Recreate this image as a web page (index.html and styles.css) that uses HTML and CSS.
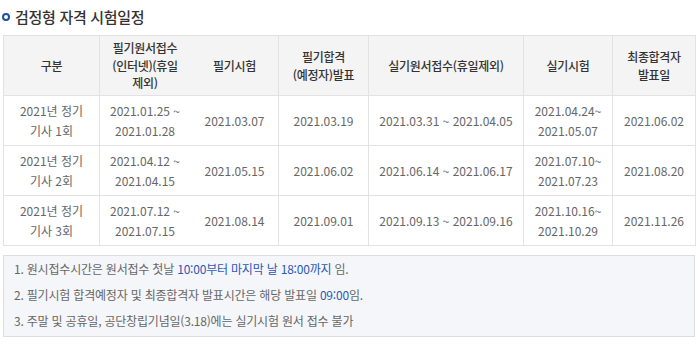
FILE: index.html
```html
<!DOCTYPE html>
<html lang="ko">
<head>
<meta charset="utf-8">
<link rel="stylesheet" href="styles.css">
</head>
<body>
<div class="page">
  <h2 class="title"><span class="dot"></span>검정형 자격 시험일정</h2>
  <table class="sched">
    <colgroup>
      <col class="c1"><col class="c2"><col class="c3"><col class="c4"><col class="c5"><col class="c6"><col class="c7">
    </colgroup>
    <thead>
      <tr>
        <th>구분</th>
        <th class="nob">필기원서접수<br>(인터넷)(휴일<br>제외)</th>
        <th>필기시험</th>
        <th>필기합격<br>(예정자)발표</th>
        <th>실기원서접수(휴일제외)</th>
        <th>실기시험</th>
        <th>최종합격자<br>발표일</th>
      </tr>
    </thead>
    <tbody>
      <tr>
        <td>2021년 정기<br>기사 1회</td>
        <td class="nob">2021.01.25 ~<br>2021.01.28</td>
        <td>2021.03.07</td>
        <td>2021.03.19</td>
        <td>2021.03.31 ~ 2021.04.05</td>
        <td>2021.04.24~<br>2021.05.07</td>
        <td>2021.06.02</td>
      </tr>
      <tr>
        <td>2021년 정기<br>기사 2회</td>
        <td class="nob">2021.04.12 ~<br>2021.04.15</td>
        <td>2021.05.15</td>
        <td>2021.06.02</td>
        <td>2021.06.14 ~ 2021.06.17</td>
        <td>2021.07.10~<br>2021.07.23</td>
        <td>2021.08.20</td>
      </tr>
      <tr>
        <td>2021년 정기<br>기사 3회</td>
        <td class="nob">2021.07.12 ~<br>2021.07.15</td>
        <td>2021.08.14</td>
        <td>2021.09.01</td>
        <td>2021.09.13 ~ 2021.09.16</td>
        <td>2021.10.16~<br>2021.10.29</td>
        <td>2021.11.26</td>
      </tr>
    </tbody>
  </table>
  <div class="notes">
    <p>1. 원시접수시간은 원서접수 첫날 <span class="hl">10:00부터 마지막 날 18:00까지</span> 임.</p>
    <p>2. 필기시험 합격예정자 및 최종합격자 발표시간은 해당 발표일 <span class="hl">09:00</span>임.</p>
    <p>3. 주말 및 공휴일, 공단창립기념일(3.18)에는 실기시험 원서 접수 불가</p>
  </div>
</div>
</body>
</html>
```

FILE: styles.css
```css
html, body {
  margin: 0;
  padding: 0;
  background: #fff;
}
.page {
  width: 692px;
  padding: 0 5px 0 3px;
  font-family: "Noto Sans CJK KR", "Noto Sans", sans-serif;
  color: #666;
}
.title {
  display: flex;
  align-items: center;
  gap: 5px;
  margin: 0 0 0 -1px;
  height: 35px;
  padding-bottom: 3px;
  box-sizing: border-box;
  font-size: 15px;
  font-weight: 500;
  color: #333;
  letter-spacing: -0.3px;
}
.dot {
  width: 4px;
  height: 4px;
  border: 2px solid #1f4f9f;
  border-radius: 50%;
  background: #fff;
  margin-top: 1px;
}
.sched {
  width: 692px;
  border-collapse: collapse;
  table-layout: fixed;
  font-size: 12px;
}
.c1 { width: 96px; }
.c2 { width: 91px; }
.c3 { width: 88px; }
.c4 { width: 90px; }
.c5 { width: 155px; }
.c6 { width: 89px; }
.c7 { width: 83px; }
.sched th, .sched td {
  border: 1px solid #e2e2e2;
  text-align: center;
  vertical-align: middle;
  padding: 0;
}
.sched th {
  background: #f4f4f4;
  height: 59px;
  font-size: 12px;
  font-weight: 500;
  color: #333;
  line-height: 17.5px;
  letter-spacing: -0.3px;
}
.sched td {
  height: 49px;
  line-height: 20px;
  color: #666;
}
.sched .nob {
  border-right-color: transparent;
}
.notes {
  margin-top: 9px;
  height: 82px;
  box-sizing: border-box;
  background: #f5f6fa;
  border: 1px solid #dedede;
  padding: 0 0 0 10px;
  font-size: 12px;
  color: #666;
}
.notes p {
  margin: 0;
  line-height: 26px;
  letter-spacing: -0.2px;
}
.hl {
  color: #2a58b8;
}
```
